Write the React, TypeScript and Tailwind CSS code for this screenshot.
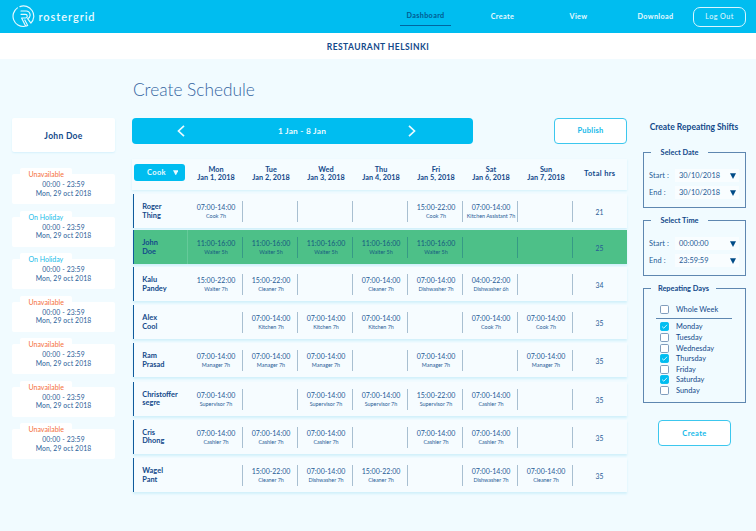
import React from "react";

type Shift = [string, string] | null;
type Row = { first: string; last: string; total: string; gap: string; shifts: Shift[]; active?: boolean };

const M = "07:00-14:00";
const E = "15:00-22:00";
const W = "11:00-16:00";

const rows: Row[] = [
  { first: "Roger", last: "Thing", total: "21", gap: "mt-0", shifts: [[M, "Cook 7h"], null, null, null, [E, "Cook 7h"], [M, "Kitchen Assistant 7h"], null] },
  { first: "John", last: "Doe", total: "25", gap: "mt-[2px]", active: true, shifts: [[W, "Waiter 5h"], [W, "Waiter 5h"], [W, "Waiter 5h"], [W, "Waiter 5h"], [W, "Waiter 5h"], null, null] },
  { first: "Kalu", last: "Pandey", total: "34", gap: "mt-[3px]", shifts: [[E, "Waiter 7h"], [E, "Cleaner 7h"], null, [M, "Cleaner 7h"], [M, "Dishwasher 7h"], ["04:00-22:00", "Dishwasher 6h"], null] },
  { first: "Alex", last: "Cool", total: "35", gap: "mt-[4px]", shifts: [null, [M, "Kitchen 7h"], [M, "Kitchen 7h"], [M, "Kitchen 7h"], null, [M, "Cook 7h"], [M, "Cook 7h"]] },
  { first: "Ram", last: "Prasad", total: "35", gap: "mt-[4.3px]", shifts: [[M, "Manager 7h"], [M, "Manager 7h"], [M, "Manager 7h"], null, [M, "Manager 7h"], null, [M, "Manager 7h"]] },
  { first: "Christoffer", last: "segre", total: "35", gap: "mt-[4.4px]", shifts: [[M, "Supervisor 7h"], null, [M, "Supervisor 7h"], [M, "Supervisor 7h"], [E, "Supervisor 7h"], [M, "Cashier 7h"], null] },
  { first: "Cris", last: "Dhong", total: "35", gap: "mt-[4.3px]", shifts: [[M, "Cashier 7h"], [M, "Cashier 7h"], [M, "Cashier 7h"], null, [M, "Cashier 7h"], [M, "Cashier 7h"], null] },
  { first: "Wagel", last: "Pant", total: "35", gap: "mt-[4.5px]", shifts: [null, [E, "Cleaner 7h"], [M, "Dishwasher 7h"], [E, "Cleaner 7h"], null, [M, "Dishwasher 7h"], [M, "Cleaner 7h"]] },
];

const days = ["Mon", "Tue", "Wed", "Thu", "Fri", "Sat", "Sun"];
const absences = ["Unavailable", "On Holiday", "On Holiday", "Unavailable", "Unavailable", "Unavailable", "Unavailable"];
const weekdays = ["Monday", "Tuesday", "Wednesday", "Thursday", "Friday", "Saturday", "Sunday"];
const checked = ["Monday", "Thursday", "Saturday"];

function Logo() {
  return (
    <svg className="h-[23px] w-[23px]" viewBox="0 0 23 23" fill="none" stroke="#e6f9ff" strokeWidth="1.15" strokeLinecap="round" strokeLinejoin="round">
      <path d="M5.4 2.9A10.2 10.2 0 0 0 12.4 21.4" />
      <path d="M7.9 1.6A10.2 10.2 0 0 1 18.9 18.2L15.6 13.7A4 4 0 0 0 14 6H9" />
      <path d="M9 9.3h4.4a1.8 1.8 0 0 1 0 3.7H9.6l4.1 8.2 2-.8-2.9-5.4" />
    </svg>
  );
}

function Caret({ className }: { className: string }) {
  return (
    <svg className={className} viewBox="0 0 6 6" fill="currentColor">
      <path d="M0 .3h6L3 6z" />
    </svg>
  );
}

function Header() {
  return (
    <header className="flex h-[33px] items-center bg-[#00bdf0] pl-3 text-[7.2px] font-bold tracking-[0.38px] text-[#e9faff]">
      <Logo />
      <span className="ml-[3.5px] w-[361.5px] text-[11px] font-semibold leading-[14px] tracking-[0.95px]">rostergrid</span>
      <nav className="flex items-center">
        <span className="flex h-[18px] w-[51px] items-center justify-center border-b border-[#00669f] text-[#005b91]">Dashboard</span>
        <span className="ml-[26px] w-[51px] pt-px text-center">Create</span>
        <span className="ml-[25px] w-[51px] pt-px text-center">View</span>
        <span className="ml-[26px] w-[51px] pt-px text-center">Download</span>
      </nav>
      <button className="ml-[12px] h-[20px] w-[53px] rounded-[7px] border border-[#d8f6ff] pt-px text-[7.2px] font-normal tracking-[0.42px]">Log Out</button>
    </header>
  );
}

function Sidebar() {
  return (
    <aside className="ml-3 mt-[59px] w-[103px] shrink-0 text-center">
      <div className="flex h-[34px] items-center justify-center rounded-[2px] bg-white pt-[2px] text-[8.5px] font-bold tracking-[0.3px] shadow-[0_1px_2px_#d5f1fc]">John Doe</div>
      <div className="mt-[16px] flex flex-col gap-[6.5px]">
        {absences.map((kind, i) => (
          <div key={i} className="h-[36px]">
            <div className={`ml-[8px] h-[6px] w-[52px] rounded-t-[2px] bg-white pl-[8.5px] text-left text-[7px] leading-[12px] ${kind === "Unavailable" ? "text-[#f56f3d]" : "text-[#20bce9]"}`}>{kind}</div>
            <div className="h-[30px] rounded-[2px] bg-white pt-[6.3px] text-[6.8px] leading-[8.6px] tracking-[0.12px] text-[#2a6099]">
              <div>00:00 - 23:59</div>
              <div>Mon, 29 oct 2018</div>
            </div>
          </div>
        ))}
      </div>
    </aside>
  );
}

function ScheduleRow({ row }: { row: Row }) {
  return (
    <div className={`ml-px flex h-[34px] border-l border-[#105b9c] shadow-[0_2px_2px_#d2f1fb] ${row.gap} ${row.active ? "bg-[#4dc088]" : "bg-[#f6fcff]"}`}>
      <div className={`w-[54px] pl-[8.3px] pt-[9px] text-[7.4px] font-bold leading-[8.5px] ${row.active ? "border-r border-[#65ca9a]" : ""}`}>
        {row.first}<br />{row.last}
      </div>
      {row.shifts.map((shift, i) => (
        <div key={i} className={`mt-[7px] h-[21px] w-[55px] border-r pl-[2px] text-center ${row.active ? "border-[#369a86]" : "border-[#a8bfd1]"}`}>
          {shift && (
            <div className={`whitespace-nowrap pt-[2px] ${row.active ? "text-[#155a80]" : "text-[#265b96]"}`}>
              <div className="text-[7px] leading-[9px]">{shift[0]}</div>
              <div className="-mx-1 text-[5.4px] leading-[8px]">{shift[1]}</div>
            </div>
          )}
        </div>
      ))}
      <div className="flex flex-1 items-center justify-center pr-px pt-[2px] text-[6.8px] text-[#265b96]">{row.total}</div>
    </div>
  );
}

function Schedule() {
  return (
    <main className="ml-[17px] w-[495px] shrink-0">
      <h1 className="mt-[17px] h-[42px] pl-px text-[17.3px] font-light leading-[27px] text-[#34659f]">Create Schedule</h1>
      <div className="flex items-start justify-between">
        <div className="flex h-[26px] w-[341px] items-center justify-between rounded-[4px] bg-[#00bdf0] pl-[45px] pr-[57px] text-[8.3px] font-bold text-[#e9faff]">
          <svg className="h-[12px] w-[8px]" viewBox="0 0 8 12" fill="none" stroke="currentColor" strokeWidth="1.7"><path d="M7 .8L1.5 6 7 11.2" /></svg>
          <span className="ml-[11px] pt-px tracking-[0.25px]">1 Jan - 8 Jan</span>
          <svg className="h-[12px] w-[8px]" viewBox="0 0 8 12" fill="none" stroke="currentColor" strokeWidth="1.7"><path d="M1 .8L6.5 6 1 11.2" /></svg>
        </div>
        <button className="h-[26px] w-[73px] rounded-[4px] border border-[#3cc7ee] bg-white text-[7.5px] font-bold tracking-[0.25px] text-[#14b9e9]">Publish</button>
      </div>
      <div className="mt-[15px] flex h-[31px] bg-[#f5fcff] text-center text-[7.3px] font-bold leading-[8.5px] shadow-[0_1px_2px_#d2f1fb]">
        <button className="ml-[2px] mt-[5px] flex h-[17px] w-[51px] items-center justify-between rounded-[3px] bg-[#00bdf0] pl-[13px] pr-[7px] text-[7.5px] tracking-[0.35px] text-[#e9faff]">
          <span className="pt-[2px]">Cook</span><Caret className="h-[5.5px] w-[5.5px]" />
        </button>
        <div className="ml-[3.5px] flex pt-[6.5px]">
          {days.map((d, i) => (
            <div key={d} className="w-[55px]">{d}<br />Jan {i + 1}, 2018</div>
          ))}
        </div>
        <div className="flex-1 pr-px pt-[10.5px] text-[7.5px] tracking-[0.32px]">Total hrs</div>
      </div>
      <div className="mt-[4px]">
        {rows.map((r) => <ScheduleRow key={r.first} row={r} />)}
      </div>
    </main>
  );
}

function Picker({ label, value }: { label: string; value: string }) {
  return (
    <div className="flex h-[13px] items-center text-[7.4px] text-[#265b96]">
      <span className="w-[26px] tracking-[0.1px]">{label} :</span>
      <span className="flex h-full w-[64px] items-center justify-between bg-white/60 pl-[4px] pr-[3px]">
        {value}<Caret className="h-[6px] w-[6px] text-[#004b87]" />
      </span>
    </div>
  );
}

function Group({ title, legend, className, children }: { title: string; legend: string; className: string; children: React.ReactNode }) {
  return (
    <fieldset className={`w-[103px] border border-[#5e87b0] ${className}`}>
      <legend className={`ml-[7px] h-[9px] text-[7.4px] font-bold leading-[9px] ${legend}`}>
        <span className="block text-center">{title}</span>
      </legend>
      {children}
    </fieldset>
  );
}

function Check({ label }: { label: string }) {
  const on = checked.includes(label);
  return (
    <label className="flex h-[10.6px] items-center gap-[7px] text-[7.4px] leading-[10px]">
      <svg className="h-[9px] w-[9px]" viewBox="0 0 9 9" fill="none">
        <rect x=".5" y=".5" width="8" height="8" rx="1.2" fill={on ? "#00bdf0" : "#fff"} stroke={on ? "#00bdf0" : "#7292b5"} strokeWidth=".9" />
        {on && <path d="M2.1 4.6l1.7 1.6 3.2-3.4" stroke="#dff7ff" strokeWidth=".9" />}
      </svg>
      <span className="pt-px">{label}</span>
    </label>
  );
}

function Repeating() {
  return (
    <aside className="ml-[16px] mt-[62px] w-[103px] shrink-0">
      <h2 className="whitespace-nowrap pr-px text-center text-[8.5px] font-bold leading-[12px]">Create Repeating Shifts</h2>
      <Group title="Select Date" legend="w-[57px]" className="mt-[15px] h-[60px]">
        <div className="flex flex-col gap-[4px] pl-[5px] pt-[12px]">
          <Picker label="Start" value="30/10/2018" />
          <Picker label="End" value="30/10/2018" />
        </div>
      </Group>
      <Group title="Select Time" legend="w-[57px]" className="mt-[8px] h-[60px]">
        <div className="flex flex-col gap-[4px] pl-[5px] pt-[12px]">
          <Picker label="Start" value="00:00:00" />
          <Picker label="End" value="23:59:59" />
        </div>
      </Group>
      <Group title="Repeating Days" legend="w-[65px]" className="mt-[8px] h-[119px]">
        <div className="pl-[16px] pt-[11px]">
          <Check label="Whole Week" />
        </div>
        <div className="ml-[12px] mt-[3px] w-[76px] border-t border-[#5e87b0]" />
        <div className="pl-[16px] pt-[3px]">
          {weekdays.map((d) => <Check key={d} label={d} />)}
        </div>
      </Group>
      <button className="ml-[15px] mt-[17px] h-[26px] w-[73px] rounded-[4px] border border-[#3cc7ee] bg-white pt-px text-[7.5px] font-bold tracking-[0.35px] text-[#14b9e9]">Create</button>
    </aside>
  );
}

export default function App() {
  return (
    <div className="h-[531px] w-[756px] overflow-hidden bg-[#f1fbff] font-['Lato',sans-serif] text-[#12498a]">
      <Header />
      <div className="flex h-[26px] items-center justify-center bg-white pt-[2px] text-[8.5px] font-bold tracking-[0.42px]">RESTAURANT HELSINKI</div>
      <div className="flex">
        <Sidebar />
        <Schedule />
        <Repeating />
      </div>
    </div>
  );
}
